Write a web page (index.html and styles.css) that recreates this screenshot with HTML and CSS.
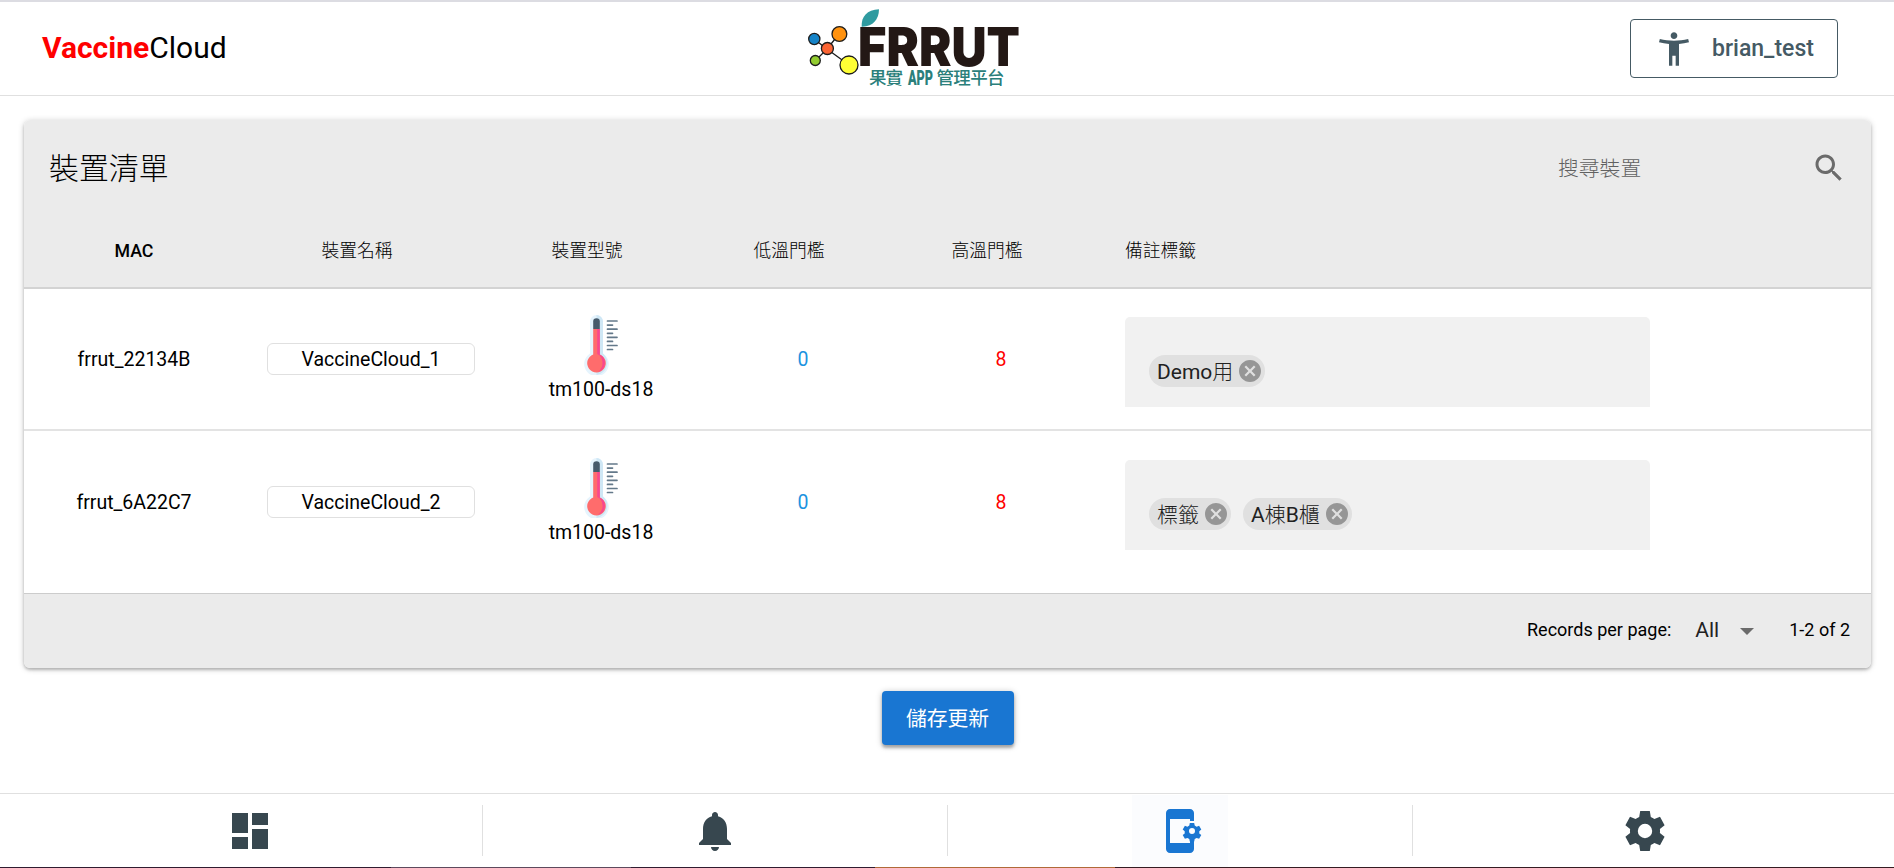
FILE: index.html
```html
<!DOCTYPE html>
<html lang="zh-Hant">
<head>
<meta charset="utf-8">
<title>VaccineCloud</title>
<link rel="stylesheet" href="styles.css">
</head>
<body>
<svg class="defs" width="0" height="0" aria-hidden="true">
  <symbol id="thermo" viewBox="0 0 34 60">
    <path d="M12.500 0A6.500 6.500 0 0 1 19 6.500V38.500A12.300 12.300 0 1 1 6 38.500V6.500A6.500 6.500 0 0 1 12.500 0z" fill="#e6f4fd"/>
    <path d="M12.500 0A6.500 6.500 0 0 1 19 6.500V38.500A12.300 12.300 0 0 1 12.500 60z" fill="#cfe7f5"/>
    <path d="M9.200 14h6.600v25.500A9.300 9.300 0 1 1 9.200 39.500z" fill="#ff6c6c"/>
    <path d="M13.200 14h2.600v25.500A9.300 9.300 0 0 1 14 56.800Q19 53 18.500 47T13.200 39z" fill="#f8478f"/>
    <path d="M9.200 14V6.500a3.300 3.300 0 0 1 6.600 0V14z" fill="#465a6b"/>
    <path d="M23.500 6h9.500M23.500 14.200h9.500M23.500 22.300h9.500M23.500 30.500h9.500M23.500 10.100h5M23.500 18.300h5M23.500 26.400h5M23.500 34.500h5" stroke="#64798a" stroke-width="1.700" stroke-linecap="round"/>
  </symbol>
  <symbol id="cancel" viewBox="2 2 20 20">
    <path d="M12 2C6.470 2 2 6.470 2 12s4.470 10 10 10 10-4.470 10-10S17.530 2 12 2zm5 13.590L15.590 17 12 13.410 8.410 17 7 15.590 10.590 12 7 8.410 8.410 7 12 10.590 15.590 7 17 8.410 13.410 12 17 15.590z"/>
  </symbol>
</svg>

<header class="topbar">
  <div class="brand"><b>Vaccine</b>Cloud</div>
  <svg class="logo" viewBox="0 0 230 92" width="230" height="92">
    <path d="M14 37L27 47 39 32M27 47L15 59M27 47L49 63" fill="none" stroke="#1c1c1c" stroke-width="1.300"/>
    <g stroke="#1c1c1c" stroke-width="1.300">
      <circle cx="14.300" cy="37" r="5.600" fill="#1583c7"/>
      <circle cx="39.400" cy="32" r="7.400" fill="#ff920f"/>
      <circle cx="27.400" cy="46.500" r="6" fill="#fb6433"/>
      <circle cx="15.300" cy="58.500" r="5" fill="#92cc30"/>
      <circle cx="49" cy="63" r="9" fill="#ffff35"/>
    </g>
    <path d="M61.700 24.700C61 15 67 7.500 79 7.300C79 17 73 25 61.700 24.700z" fill="#2f9ba0"/>
    <text class="logo-name" x="58" y="64.300" textLength="162" lengthAdjust="spacingAndGlyphs">FRRUT</text>
    <text class="logo-sub" x="69" y="82.300" textLength="34">果實</text>
    <text class="logo-app" x="108" y="83" textLength="25" lengthAdjust="spacingAndGlyphs">APP</text>
    <text class="logo-sub" x="136.500" y="82.300" textLength="68">管理平台</text>
  </svg>
  <button class="user">
    <svg viewBox="0 0 24 24" width="40" height="40"><path d="M20.500 6c-2.610.7-5.670 1-8.500 1s-5.890-.3-8.500-1L3 8c1.860.5 4 .83 6 1v13h2v-6h2v6h2V9c2-.17 4.140-.5 6-1l-.5-2zM12 6c1.100 0 2-.9 2-2s-.9-2-2-2-2 .9-2 2 .9 2 2 2z"/></svg>
    <span>brian_test</span>
  </button>
</header>

<main class="content">
  <section class="card">
    <div class="card-top">
      <h1 class="title">裝置清單</h1>
      <div class="search">
        <span class="placeholder">搜尋裝置</span>
        <svg viewBox="0 0 24 24" width="36" height="36"><path d="M15.500 14h-.79l-.28-.27C15.410 12.590 16 11.110 16 9.500 16 5.910 13.090 3 9.500 3S3 5.910 3 9.500 5.910 16 9.500 16c1.610 0 3.090-.59 4.230-1.570l.27.28v.79l5 4.990L20.490 19l-4.990-5zm-6 0C7.010 14 5 11.990 5 9.500S7.010 5 9.500 5 14 7.010 14 9.500 11.990 14 9.500 14z"/></svg>
      </div>
    </div>
    <div class="row head">
      <div class="cell mac">MAC</div>
      <div class="cell sortable">裝置名稱</div>
      <div class="cell sortable">裝置型號</div>
      <div class="cell sortable">低溫門檻</div>
      <div class="cell sortable">高溫門檻</div>
      <div class="cell tags-col">備註標籤</div>
    </div>
    <div class="row item">
      <div class="cell">frrut_22134B</div>
      <div class="cell"><div class="name-box">VaccineCloud_1</div></div>
      <div class="cell model"><svg width="34" height="60"><use href="#thermo"/></svg><span>tm100-ds18</span></div>
      <div class="cell low">0</div>
      <div class="cell high">8</div>
      <div class="cell tags-col"><div class="tags"><span class="chip"><span><b>Demo</b>用</span><svg width="22" height="22"><use href="#cancel"/></svg></span></div></div>
    </div>
    <div class="row item last">
      <div class="cell">frrut_6A22C7</div>
      <div class="cell"><div class="name-box">VaccineCloud_2</div></div>
      <div class="cell model"><svg width="34" height="60"><use href="#thermo"/></svg><span>tm100-ds18</span></div>
      <div class="cell low">0</div>
      <div class="cell high">8</div>
      <div class="cell tags-col"><div class="tags"><span class="chip"><span>標籤</span><svg width="22" height="22"><use href="#cancel"/></svg></span><span class="chip"><span><b>A</b>棟<b>B</b>櫃</span><svg width="22" height="22"><use href="#cancel"/></svg></span></div></div>
    </div>
    <div class="card-foot">
      <span class="per-page">Records per page:</span>
      <span class="all">All</span>
      <svg class="caret" viewBox="0 0 14 7" width="14" height="7"><path d="M0 0h14L7 7z"/></svg>
      <span class="range">1-2 of 2</span>
    </div>
  </section>
  <button class="save">儲存更新</button>
</main>

<nav class="tabs">
  <a class="tab tab-first"><svg viewBox="0 0 24 24" width="48" height="48"><path d="M3 13h8V3H3v10zm0 8h8v-6H3v6zm10 0h8V11h-8v10zm0-18v6h8V3h-8z"/></svg></a>
  <i class="divider"></i>
  <a class="tab"><svg viewBox="0 0 24 24" width="48" height="48"><path d="M12 22c1.100 0 2-.9 2-2h-4c0 1.100.89 2 2 2zm6-6v-5c0-3.070-1.640-5.640-4.500-6.320V4c0-.83-.67-1.500-1.500-1.500s-1.500.67-1.500 1.500v.68C7.630 5.360 6 7.920 6 11v5l-2 2v1h16v-1l-2-2z"/></svg></a>
  <i class="divider"></i>
  <a class="tab"><span class="active"><svg viewBox="0 0 24 24" width="48" height="48"><path d="M7 1C5.900 1 5 1.900 5 3v18c0 1.100.9 2 2 2h10c1.100 0 2-.9 2-2v-4h-2v1H7V6h10v1h2V3c0-1.100-.9-2-2-2z"/><path fill-rule="evenodd" d="M16.900 8h2.200l.25 1.300.95.550 1.250-.45 1.100 1.850-1 .85v1.100l1 .85-1.100 1.850-1.250-.45-.95.550-.25 1.300h-2.200l-.25-1.300-.95-.55-1.250.45-1.100-1.850 1-.85v-1.100l-1-.85 1.100-1.850 1.250.45.950-.55zM18 10.500a1.500 1.500 0 1 0 0 3 1.500 1.500 0 1 0 0-3z"/></svg></span></a>
  <i class="divider"></i>
  <a class="tab tab-last"><svg viewBox="-12 -12 24 24" width="48" height="48"><path fill-rule="evenodd" d="M-2.400-10H2.400L2.900-7Q3.900-6.600 4.700-6L7.500-7.100 9.800-2.900 7.450-1.050Q7.600 0 7.450 1.050L9.800 2.900 7.500 7.100 4.700 6Q3.900 6.600 2.900 7L2.400 10H-2.400L-2.900 7Q-3.900 6.600-4.700 6L-7.500 7.100-9.800 2.900-7.450 1.050Q-7.600 0-7.450-1.050L-9.800-2.900-7.500-7.100-4.700-6Q-3.900-6.600-2.900-7zM0-3.600A3.600 3.600 0 1 0 0 3.600 3.600 3.600 0 1 0 0-3.600z"/></svg></a>
</nav>
<div class="edge"></div>
</body>
</html>
```
FILE: styles.css
```css
* { box-sizing: border-box; }
body {
  margin: 0;
  height: 868px;
  display: flex;
  flex-direction: column;
  overflow: hidden;
  background: #fff;
  color: #000;
  font-family: Roboto, "Noto Sans CJK TC", sans-serif;
  font-size: 19.500px;
}
.defs { display: none; }
svg { display: block; flex: none; }
button { font-family: inherit; }

.topbar {
  height: 96px;
  flex: none;
  display: flex;
  align-items: flex-start;
  border-top: 2px solid #dcdce2;
  border-bottom: 1px solid #e0e0e0;
  padding: 0 56px 0 42px;
}
.brand {
  flex: 0 0 758px;
  margin-top: 28px;
  font-size: 30px;
  line-height: 36px;
}
.brand b { color: #f00; font-weight: 700; }
.logo { overflow: visible; }
.logo-name { font: 900 53px Inter, sans-serif; fill: #231815; }
.logo-sub { font: 500 17.500px "Noto Sans CJK TC", sans-serif; fill: #2b7f7b; }
.logo-app { font: 900 21px Roboto, sans-serif; fill: #2b7f7b; }
.user {
  width: 208px;
  height: 59px;
  margin: 17px 0 0 auto;
  padding: 0 0 0 23px;
  display: flex;
  align-items: center;
  gap: 18px;
  border: 1px solid #455a64;
  border-radius: 4px;
  background: transparent;
  color: #455a64;
  font-size: 23px;
  font-weight: 500;
}
.user svg { fill: #455a64; }

.content {
  flex: 1;
  display: flex;
  flex-direction: column;
  align-items: center;
  padding: 24px 23px 0 24px;
}
.card {
  width: 100%;
  height: 548px;
  flex: none;
  border-radius: 6px;
  overflow: hidden;
  box-shadow: 0 1px 6px rgba(0,0,0,.2), 0 2px 3px rgba(0,0,0,.2);
}
.card-top {
  height: 96px;
  display: flex;
  align-items: center;
  justify-content: space-between;
  padding: 0 24px 0 25px;
  background: #ebebeb;
}
.title { margin: 0; padding-bottom: 4px; font-size: 29.900px; font-weight: 300; }
.search { display: flex; align-items: center; justify-content: space-between; width: 289px; }
.placeholder { padding-bottom: 2px; color: #616161; font-size: 20.800px; font-weight: 300; }
.search svg { fill: #6b6b6b; }

.row {
  display: grid;
  grid-template-columns: 220px 254px 206px 198px 198px 1fr;
}
.cell { display: flex; align-items: center; justify-content: center; }
.head {
  height: 73px;
  padding-bottom: 2px;
  background: #ebebeb;
  border-bottom: 2px solid #d3d3d3;
  font-size: 17.800px;
  font-weight: 300;
}
.head .cell { padding-bottom: 3px; }
.head .mac { padding-bottom: 0; font-weight: 500; }
.sortable { padding-right: 28px; }
.cell.tags-col { justify-content: flex-start; padding-left: 25px; }
.item { height: 142px; border-bottom: 2px solid #e3e3e3; }
.item.last { height: 163px; padding-bottom: 20px; border-bottom: 1px solid #ccc; }
.name-box {
  width: 208px;
  height: 32px;
  border: 1px solid #e0e0e0;
  border-radius: 6px;
  line-height: 31px;
  text-align: center;
}
.model { flex-direction: column; }
.model span { height: 28px; line-height: 30px; }
.low { color: #1b93e0; }
.high { color: #f00; }
.tags {
  width: 525px;
  height: 90px;
  margin-top: 6px;
  padding: 38px 24px 0;
  display: flex;
  gap: 12px;
  background: #f1f1f1;
  border-radius: 5px 5px 0 0;
}
.chip {
  height: 32px;
  padding: 0 4px 0 8px;
  display: flex;
  align-items: center;
  gap: 6px;
  border-radius: 16px;
  background: #e0e0e0;
  color: #212121;
  font-weight: 300;
  font-size: 21px;
}
.chip span { padding-bottom: 2px; }
.chip b { font-weight: 400; }
.chip svg { fill: #969696; }

.card-foot {
  height: 76px;
  display: flex;
  align-items: center;
  justify-content: flex-end;
  padding: 0 21px 4px 0;
  background: #ebebeb;
  font-size: 18px;
}
.per-page, .range { padding-bottom: 2px; }
.all { margin-left: 24px; font-size: 21px; color: #222; }
.caret { margin: 3px 35px 0 21px; fill: #6b6b6b; }
.save {
  width: 132px;
  height: 54px;
  margin-top: 23px;
  padding: 0 0 3px;
  border: 0;
  border-radius: 4px;
  background: #1976d2;
  color: #fff;
  font-size: 20.800px;
  font-weight: 400;
  box-shadow: 0 1px 6px rgba(0,0,0,.25), 0 3px 3px rgba(0,0,0,.25);
}

.tabs {
  height: 74px;
  flex: none;
  display: flex;
  align-items: center;
  border-top: 1px solid #e0e0e0;
}
.tab { flex: 1; display: flex; justify-content: center; fill: #37474f; }
.tab-first { padding-left: 17px; flex: 0 0 482px; }
.tab-last { padding-right: 17px; flex: 0 0 481px; }
.divider { width: 1px; height: 51px; background: #e0e0e0; }
.active {
  width: 96px;
  height: 72px;
  display: flex;
  align-items: center;
  justify-content: center;
  background: #fbfcfe;
  fill: #1976d2;
}
.edge {
  height: 1px;
  flex: none;
  background: linear-gradient(90deg, #301c30 391px, #5d4a5d 391px 631px, #301c30 631px 875px, #b06a38 875px 1115px, #351c22 1115px);
}
```
